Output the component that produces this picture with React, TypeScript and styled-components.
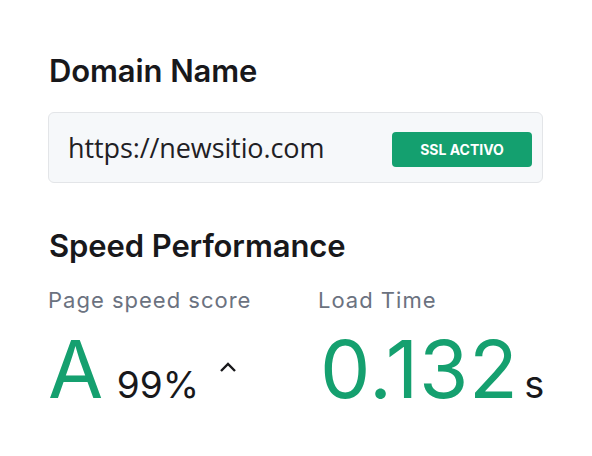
import React from 'react';
import styled, { createGlobalStyle } from 'styled-components';

const Global = createGlobalStyle`
  body {
    margin: 0;
    background: #ffffff;
    font-family: Inter, "Liberation Sans", sans-serif;
    color: #18181b;
  }
`;

const Page = styled.div`
  width: 592px;
  height: 456px;
  box-sizing: border-box;
  padding: 52px 49px 0 48px;
`;

const Heading = styled.h2`
  margin: 0;
  padding-left: 1px;
  font-size: 31px;
  font-weight: 600;
  line-height: 38px;
  letter-spacing: -0.1px;
  color: #18181b;
`;

const DomainBox = styled.div`
  margin-top: 22px;
  height: 71px;
  box-sizing: border-box;
  display: flex;
  align-items: center;
  justify-content: space-between;
  padding: 0 10px 0 19px;
  background: #f6f8fa;
  border: 1px solid #e3e5e8;
  border-radius: 6px;
`;

const Url = styled.span`
  font-family: "Open Sans", Lato, sans-serif;
  font-size: 27px;
  line-height: 36px;
  letter-spacing: -0.1px;
  color: #1f2024;
`;

const Badge = styled.span`
  margin-top: 4px;
  width: 140px;
  height: 35px;
  display: flex;
  align-items: center;
  justify-content: center;
  background: #14a06f;
  color: #ffffff;
  border-radius: 4px;
  font-size: 14px;
  font-weight: 700;
  letter-spacing: 0;
`;

const Section = styled.div`
  margin-top: 44px;
`;

const Metrics = styled.div`
  margin-top: 20px;
  display: grid;
  grid-template-columns: 270px 1fr;
`;

const Label = styled.div`
  font-size: 22px;
  letter-spacing: 1px;
  color: #6b7280;
  line-height: 30px;
`;

const ValueRow = styled.div`
  margin-top: 14px;
  height: 80px;
  display: flex;
  align-items: baseline;
`;

const Big = styled.span<{ $shift?: number }>`
  margin-left: ${(p) => p.$shift ?? 0}px;
  font-size: 80px;
  line-height: 80px;
  color: #15a06f;
  font-weight: 400;
  letter-spacing: 0.6px;
`;

const Percent = styled.span`
  margin-left: 13px;
  font-size: 37px;
  color: #18181b;
`;

const Chevron = styled.svg`
  margin-left: 20px;
  align-self: flex-end;
  margin-bottom: 36px;
`;

const Unit = styled.span`
  margin-left: 6px;
  font-size: 38px;
  color: #18181b;
`;

export default function App() {
  return (
    <>
      <Global />
      <Page>
        <Heading>Domain Name</Heading>
        <DomainBox>
          <Url>https://newsitio.com</Url>
          <Badge>SSL ACTIVO</Badge>
        </DomainBox>
        <Section>
          <Heading>Speed Performance</Heading>
          <Metrics>
            <div>
              <Label>Page speed score</Label>
              <ValueRow>
                <Big>A</Big>
                <Percent>99%</Percent>
                <Chevron width="18" height="12" viewBox="0 0 18 12" fill="none">
                  <path d="M2 10 L9 3 L16 10" stroke="#18181b" strokeWidth="2.4" />
                </Chevron>
              </ValueRow>
            </div>
            <div>
              <Label>Load Time</Label>
              <ValueRow>
                <Big $shift={2}>0.132</Big>
                <Unit>s</Unit>
              </ValueRow>
            </div>
          </Metrics>
        </Section>
      </Page>
    </>
  );
}
